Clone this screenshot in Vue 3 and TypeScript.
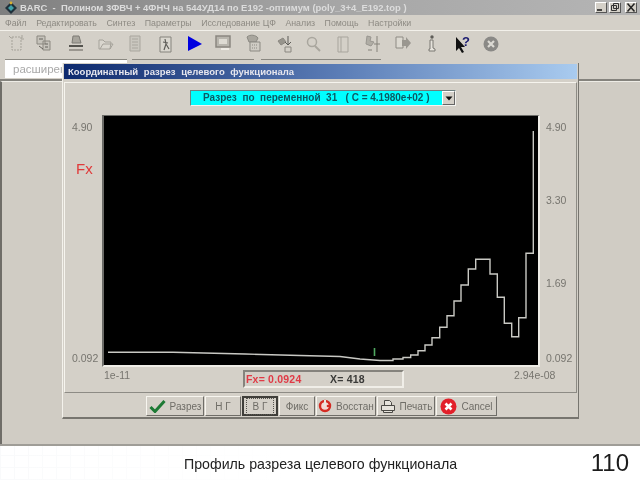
<script setup lang="ts">
import { computed } from 'vue';

const appTitle = 'BARC  -  Полином 3ФВЧ + 4ФНЧ на 544УД14 по E192 -оптимум (poly_3+4_E192.top )';
const selectText = 'Разрез  по  переменной  31   ( C = 4.1980e+02 )';

const menuItems = ['Файл', 'Редактировать', 'Синтез', 'Параметры', 'Исследование ЦФ', 'Анализ', 'Помощь', 'Настройки'];

// screen coordinates of the curve: a smooth run, then stairs (x = start of each tread)
const PLOT_X = 104;
const PLOT_Y = 116;
const smoothRun: [number, number][] = [
  [108, 352.3], [173, 352.3], [245, 354], [300, 355.5], [340, 356.5], [360, 359], [380, 360.5]
];
const stairs: [number, number][] = [
  [393, 359], [403, 357.5], [410.7, 355], [418, 350.7], [425, 345], [432, 337.7], [439.7, 327.3],
  [447, 315.7], [454, 301], [461, 285], [468.3, 269], [475.7, 259.3], [490, 274], [497.3, 297.3],
  [504.3, 323.3], [511.7, 336.7], [518.7, 317.7], [526, 253.3], [533.3, 131]
];

const curvePoints = computed(() => {
  const pts = smoothRun.map(([x, y]) => `${x - PLOT_X},${y - PLOT_Y}`);
  let prevY = smoothRun[smoothRun.length - 1][1];
  for (const [x, y] of stairs) {
    pts.push(`${x - PLOT_X},${prevY - PLOT_Y}`, `${x - PLOT_X},${y - PLOT_Y}`);
    prevY = y;
  }
  return pts.join(' ');
});

const buttons = [
  { label: 'Разрез', width: 58, icon: 'check' },
  { label: 'Н Г', width: 36, icon: '' },
  { label: 'В Г', width: 36, icon: '', active: true },
  { label: 'Фикс', width: 36, icon: '' },
  { label: 'Восстан', width: 60, icon: 'restore' },
  { label: 'Печать', width: 58, icon: 'print' },
  { label: 'Cancel', width: 61, icon: 'cancel' }
];
</script>

<template>
  <div class="slide">
    <div class="app">
      <div class="titlebar">
        <svg class="app-icon" width="15" height="14" viewBox="0 0 15 14">
          <path d="M7 1 13 7 7 13 1 7Z" fill="#20303a" />
          <path d="M7 4 10 7 7 10 4 7Z" fill="#3fa0a8" />
          <circle cx="7" cy="2" r="1.4" fill="#d8b030" />
        </svg>
        <span class="app-title">{{ appTitle }}</span>
        <div class="win-btns">
          <span class="win-btn"><svg width="10" height="9" viewBox="0 0 10 9"><path d="M1 7h5" stroke="#222" stroke-width="1.6" /></svg></span>
          <span class="win-btn"><svg width="10" height="9" viewBox="0 0 10 9"><path d="M3.5 .5h5v5h-5zM1.5 2.5h5v5h-5z" fill="#d4d0c8" stroke="#333" /></svg></span>
          <span class="win-btn close"><svg width="10" height="9" viewBox="0 0 10 9"><path d="M1.5 .5 8.5 8.5M8.5 .5 1.5 8.5" stroke="#222" stroke-width="1.5" /></svg></span>
        </div>
      </div>

      <div class="menubar">
        <span v-for="item in menuItems" :key="item">{{ item }}</span>
      </div>

      <svg class="toolbar" width="640" height="28" viewBox="0 0 640 28" fill="none">
        <!-- y here = screen y - 31 -->
        <g stroke="#a5a299">
          <path d="M12 6h9v13h-9z" stroke-dasharray="2 1" />
          <path d="M22 4v3M24 8h-3M9 5l2 2" />
        </g>
        <g stroke="#8b8880">
          <path d="M37 5h8v8h-8zM43 10h7v9h-7z" fill="#c6c3bb" />
          <path d="M39 8h4M39 15l4 3M45 13h3M45 16h3" stroke="#65635d" />
        </g>
        <g>
          <path d="M73 5h6l2 7h-9z" fill="#a8a59d" stroke="#7d7b75" />
          <path d="M69 15h14" stroke="#55544f" stroke-width="2" />
          <path d="M69 19h14" stroke="#88857e" stroke-width="1.5" />
        </g>
        <path d="M99 18V9h4l2 2h6l-1 7zM100 18l3-5h10l-3 5" stroke="#a5a29a" fill="#d9d6ce" />
        <g stroke="#a9a69e">
          <path d="M130 5h10v15h-10z" fill="#cac7bf" />
          <path d="M132 8h6M132 11h6M132 14h6M132 17h6" />
        </g>
        <g>
          <path d="M160 6h11v15h-11z" fill="#dad7cf" stroke="#85837d" />
          <path d="M165 8l1 5-2 6M166 13l3 5M163 11l5 1" stroke="#5e5d58" stroke-width="1.2" />
        </g>
        <path d="M188 5 202 13 188 20Z" fill="#0000e0" />
        <g>
          <path d="M216 5h14v11h-14z" fill="#b8b5ad" stroke="#8a8780" stroke-width="1.5" />
          <path d="M219 8h8v5h-8z" fill="#dedbd3" />
          <path d="M221 18h8" stroke="#efece5" stroke-width="2" />
        </g>
        <g stroke="#8b8982">
          <path d="M247 6c3-3 9-2 11 1l-2 4h-7z" fill="#a9a69e" />
          <path d="M250 11h10v9h-10z" fill="#cfccc4" />
          <path d="M252 14h6M252 17h6" stroke-dasharray="1 1" />
        </g>
        <g stroke="#8a8780">
          <path d="M278 10l5-3 3 4-5 3z" fill="#98958d" />
          <path d="M288 5v9M285 11l3 3 3-3" stroke="#5c5b56" />
          <path d="M285 16h6v5h-6z" />
        </g>
        <g stroke="#a9a69e">
          <circle cx="312" cy="11" r="4.5" stroke-width="1.5" />
          <path d="M315 15l5 5" stroke-width="2" />
        </g>
        <path d="M338 6h10v15h-10zM341 6v15" stroke="#a8a59d" />
        <g stroke="#999690">
          <path d="M367 5l4 1-1 4 4 1-3 4-5-2z" fill="#b0ada5" />
          <path d="M377 5v16M374 13h6M372 19h-4" stroke="#85827b" />
        </g>
        <g>
          <path d="M396 6h7v11h-7z" fill="#dcd9d1" stroke="#8e8b84" />
          <path d="M402 9h4v-3l5 6-5 6v-3h-4z" fill="#9a9790" />
        </g>
        <g>
          <circle cx="432" cy="6" r="1.7" fill="#5f5d58" />
          <path d="M430 9h3v8l2 1v2h-6v-2h1z" fill="#e6e3dc" stroke="#7a7873" />
        </g>
        <path d="M456 6v14l3-3 3 5 2-1-3-5h4z" fill="#111" />
        <text x="462" y="15" class="help">?</text>
        <circle cx="491" cy="13" r="7.5" fill="#8a8986" />
        <path d="M488 10l6 6M494 10l-6 6" stroke="#dcdad4" stroke-width="2.2" />
      </svg>

      <div class="tabs">
        <div class="tab first">расширен</div>
        <div class="tab second"></div>
        <div class="tab third"></div>
      </div>

      <div class="client"></div>

      <div class="dialog">
        <div class="dialog-title">Координатный разрез целевого функционала</div>

        <div class="panel">
          <div class="select-row">
            <div class="select">
              <span class="select-text">{{ selectText }}</span>
              <span class="select-arrow"><svg width="8" height="5" viewBox="0 0 8 5"><path d="M0.5 0.5h7L4 4.5Z" fill="#111" /></svg></span>
            </div>
          </div>

          <div class="plot-row">
            <div class="axis left">
              <span class="v-top">4.90</span>
              <span class="fx">Fx</span>
              <span class="v-bottom">0.092</span>
            </div>
            <svg class="plot" viewBox="0 0 434 249">
              <polyline :points="curvePoints" fill="none" stroke="#c9c9c4" stroke-width="1.4" />
              <path d="M270.5 232v8" stroke="#4fa860" stroke-width="1.6" />
            </svg>
            <div class="axis right">
              <span class="v-top">4.90</span>
              <span class="v-330">3.30</span>
              <span class="v-169">1.69</span>
              <span class="v-bottom">0.092</span>
            </div>
          </div>

          <div class="info-row">
            <span class="x-min">1e-11</span>
            <div class="status">
              <span class="fx-value">Fx= 0.0924</span>
              <span class="x-value">X= 418</span>
            </div>
            <span class="x-max">2.94e-08</span>
          </div>
        </div>

        <div class="button-row">
          <button
            v-for="b in buttons"
            :key="b.label"
            class="btn"
            :class="{ active: b.active }"
            :style="{ width: `${b.width}px` }"
          >
            <svg v-if="b.icon === 'check'" width="17" height="14" viewBox="0 0 17 14">
              <path d="M1.5 8 6 12.5 15.5 2" fill="none" stroke="#1d7a35" stroke-width="3" />
            </svg>
            <svg v-if="b.icon === 'restore'" width="14" height="14" viewBox="0 0 14 14">
              <circle cx="7" cy="7" r="5" fill="#f4d8d4" stroke="#d42a22" stroke-width="2.4" />
              <path d="M7 1v6" stroke="#e9e6df" stroke-width="2" />
              <circle cx="10" cy="7" r="1.3" fill="#d42a22" />
            </svg>
            <svg v-if="b.icon === 'print'" width="16" height="15" viewBox="0 0 16 15" fill="none" stroke="#4a4945">
              <path d="M4.5 1.5h5l2 2v3h-7zM1.5 6.5h13v5h-13zM3.5 11.5h9v2h-9z" fill="#e6e3dc" />
            </svg>
            <svg v-if="b.icon === 'cancel'" width="17" height="17" viewBox="0 0 17 17">
              <circle cx="8.5" cy="8.5" r="8" fill="#e2202a" />
              <path d="M5.5 5.5l6 6M11.5 5.5l-6 6" stroke="#fff" stroke-width="2.6" />
            </svg>
            <span class="btn-text">{{ b.label }}</span>
          </button>
        </div>
      </div>
    </div>

    <div class="footer">
      <span class="caption">Профиль разреза целевого функционала</span>
      <span class="page-no">110</span>
    </div>
  </div>
</template>

<style scoped>
.slide {
  width: 640px;
  height: 480px;
  display: flex;
  flex-direction: column;
  overflow: hidden;
  font-family: "Liberation Sans", Arial, sans-serif;
  background: #fff;
}

.app {
  position: relative;
  height: 446px;
  display: flex;
  flex-direction: column;
  background: #d4d0c8;
  border-bottom: 2px solid #9f9d97;
  box-sizing: border-box;
  filter: blur(0.5px);
}

.titlebar {
  height: 15px;
  display: flex;
  align-items: center;
  padding-left: 4px;
  background: linear-gradient(90deg, #7f7f7f, #a5a5a5 50%, #b5b5b5);
}

.app-icon {
  flex: none;
  margin-right: 1px;
}

.app-title {
  white-space: pre;
  font-size: 9.45px;
  font-weight: 700;
  color: #dcdcdc;
}

.win-btns {
  margin-left: auto;
  display: flex;
  gap: 2px;
  padding-right: 3px;
}

.win-btn {
  width: 12px;
  height: 11px;
  display: flex;
  align-items: center;
  justify-content: center;
  background: #d4d0c8;
  border: 1px solid;
  border-color: #fff #555 #555 #fff;
  box-sizing: border-box;
}

.win-btn svg {
  flex: none;
}

.win-btn.close {
  margin-left: 2px;
}

.menubar {
  height: 16px;
  display: flex;
  align-items: center;
  gap: 9.5px;
  padding-left: 5px;
  font-size: 8.8px;
  color: #8d8a83;
  border-bottom: 1px solid #f2f0ea;
  box-sizing: border-box;
}

.toolbar {
  display: block;
  flex: none;
}

.tabs {
  height: 22px;
  display: flex;
  align-items: flex-start;
  gap: 5px;
  padding-left: 5px;
  border-bottom: 2px solid #85837d;
  box-sizing: border-box;
}

.tab {
  height: 19px;
  box-sizing: border-box;
  border-top: 1px solid #8a8881;
}

.tab.first {
  width: 122px;
  padding-left: 8px;
  background: #fff;
  color: #a9a9a9;
  font-size: 11.5px;
  line-height: 18px;
}

.tab.second {
  width: 122px;
}

.tab.third {
  width: 120px;
  margin-left: 2px;
}

.client {
  flex: 1;
  background: #d0ccc4;
  border-left: 2px solid #6f6d68;
  border-top: 1px solid #eeece6;
}

.dialog {
  position: absolute;
  left: 62px;
  top: 63px;
  width: 517px;
  height: 356px;
  display: flex;
  flex-direction: column;
  box-sizing: border-box;
  padding: 1px 1px 0;
  background: #d4d0c8;
  border-right: 1px solid #77756f;
  border-bottom: 2px solid #77756f;
  border-left: 1px solid #f4f2ec;
}

.dialog-title {
  height: 15px;
  padding-left: 4px;
  flex: none;
  font-size: 9.5px;
  font-weight: 700;
  line-height: 15px;
  word-spacing: 3px;
  color: #e6e6ee;
  background: linear-gradient(90deg, #0e2a6e, #5d7fb8 55%, #a9cbef);
}

.panel {
  height: 311px;
  margin-top: 3px;
  flex: none;
  display: flex;
  flex-direction: column;
  border: 1px solid;
  border-color: #f6f4ee #8d8b85 #8d8b85 #f6f4ee;
  box-sizing: border-box;
}

.select-row {
  display: flex;
  padding: 7px 0 0 125px;
}

.select {
  width: 266px;
  height: 16px;
  display: flex;
  box-sizing: border-box;
  background: #00ffff;
  border: 1px solid;
  border-color: #6d8080 #f4f4f0 #f4f4f0 #6d8080;
}

.select-text {
  flex: 1;
  padding-left: 12px;
  font-size: 10px;
  font-weight: 700;
  line-height: 14px;
  white-space: pre;
  color: #0c5a64;
}

.select-arrow {
  width: 13px;
  display: flex;
  align-items: center;
  justify-content: center;
  background: #d4d0c8;
  border: 1px solid;
  border-color: #fff #666 #666 #fff;
  box-sizing: border-box;
}

.plot-row {
  display: flex;
  margin-top: 9px;
  height: 252px;
}

.plot {
  display: block;
  flex: none;
  box-sizing: content-box;
  width: 434px;
  height: 249px;
  background: #000;
  border: solid;
  border-width: 1px 2px 2px;
  border-color: #6c6c68 #efede7 #efede7 #6c6c68;
}

.axis {
  flex: none;
  display: flex;
  flex-direction: column;
  font-size: 10.5px;
  color: #77756f;
  line-height: 12px;
}

.axis.left {
  width: 37px;
  padding-left: 7px;
  box-sizing: border-box;
}

.axis.right {
  padding-left: 6px;
}

.v-top {
  margin-top: 6px;
}

.fx {
  margin: 28px 0 0 4px;
  font-size: 15px;
  line-height: 16px;
  color: #e03a3a;
}

.axis.left .v-bottom {
  margin-top: 175px;
}

.v-330 {
  margin-top: 61px;
}

.v-169 {
  margin-top: 71px;
}

.axis.right .v-bottom {
  margin-top: 63px;
}

.info-row {
  display: flex;
  align-items: flex-start;
  padding-left: 39px;
  font-size: 10.5px;
  color: #77756f;
}

.x-min {
  width: 139px;
  margin-top: 2px;
}

.status {
  width: 161px;
  height: 18px;
  margin-top: 3px;
  display: flex;
  align-items: center;
  box-sizing: border-box;
  padding-left: 1px;
  font-size: 10.5px;
  font-weight: 700;
  letter-spacing: 0.2px;
  border: 2px solid;
  border-color: #85837d #f0eee8 #f0eee8 #85837d;
}

.fx-value {
  color: #e03a46;
  width: 84px;
}

.x-value {
  color: #3a3a38;
}

.x-max {
  margin: 2px 0 0 110px;
}

.button-row {
  display: flex;
  gap: 1px;
  margin-top: 3px;
  padding-left: 82px;
}

.btn {
  height: 20px;
  padding: 0;
  display: flex;
  align-items: center;
  justify-content: center;
  gap: 4px;
  font-family: inherit;
  font-size: 10px;
  color: #6f6d67;
  background: #d4d0c8;
  border: 1px solid;
  border-color: #f7f5ef #6f6d68 #6f6d68 #f7f5ef;
  box-sizing: border-box;
}

.btn.active {
  border: 2px solid #3f3e3a;
}

.btn.active .btn-text {
  outline: 1px dotted #55534e;
  outline-offset: 2px;
  padding: 0 4px;
}

.help {
  font-family: "Liberation Sans", Arial, sans-serif;
  font-size: 13px;
  font-weight: 700;
  fill: #1a1a70;
}

.footer {
  flex: 1;
  display: flex;
  align-items: center;
  padding-left: 184px;
  background:
    linear-gradient(90deg, rgba(255, 255, 255, 0), #fff 45%),
    repeating-linear-gradient(90deg, #f9fafb 0 1px, transparent 1px 14px),
    repeating-linear-gradient(0deg, #f9fafb 0 1px, transparent 1px 12px),
    #fff;
  color: #222;
  filter: blur(0.25px);
}

.caption {
  font-size: 14.2px;
  margin-top: 2px;
}

.page-no {
  margin-left: auto;
  margin-right: 11px;
  font-size: 24px;
  color: #1c1c1c;
}
</style>

<style>
html, body {
  margin: 0;
}
</style>
